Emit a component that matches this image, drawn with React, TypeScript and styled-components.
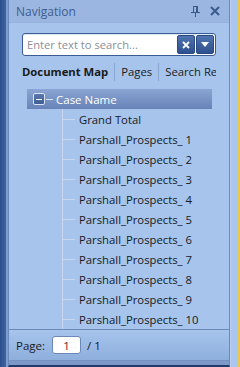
import React from "react";
import styled, { createGlobalStyle } from "styled-components";

const Global = createGlobalStyle`
  html, body { margin: 0; padding: 0; width: 240px; height: 367px; overflow: hidden; }
  body { font-family: "Open Sans", "Noto Sans", sans-serif; background: #a6c4ec; }
`;

const Frame = styled.div`
  display: flex;
  width: 240px;
  height: 367px;
  background: #3d5f98;
`;

const LeftEdge = styled.div`
  width: 6px;
  background: linear-gradient(to right, #2c4f8c, #3f64a2);
  border-right: 2px solid #7e9dcc;
`;

const Panel = styled.div`
  flex: 1;
  display: flex;
  flex-direction: column;
  min-width: 0;
  border-left: 1px solid #6a88bb;
  border-right: 1px solid #6c88b8;
  border-bottom: 2px solid #1f3a6b;
  background: #a6c4ec;
`;

const RightStrip = styled.div`
  width: 7px;
  background: #aac6ee;
  border-right: 2px solid #e8c850;
  border-left: 1px solid #b9d0ef;
`;

const TitleBar = styled.div`
  height: 22px;
  display: flex;
  align-items: center;
  padding: 0 6px 0 7px;
  background: #9ab6e1;
  border-bottom: 1px solid #95b1dc;
`;

const Title = styled.span`
  flex: 1;
  font-size: 12px;
  color: #3e5d8e;
`;

const TitleButton = styled.span`
  width: 16px;
  height: 16px;
  display: flex;
  align-items: center;
  justify-content: center;
  margin-left: 4px;
`;

const Body = styled.div`
  flex: 1;
  display: flex;
  flex-direction: column;
  padding: 10px 0 0 0;
  min-height: 0;
`;

const SearchBox = styled.div`
  margin: 0 13px 0 13px;
  height: 21px;
  display: flex;
  align-items: center;
  background: #ffffff;
  border: 1px solid #3b5c92;
  border-radius: 3px;
  box-shadow: inset 0 1px 0 #dbe6f5;
  padding: 0 1px 0 4px;
`;

const SearchText = styled.span`
  flex: 1;
  font-size: 11.2px;
  color: #8a8f98;
  white-space: nowrap;
`;

const SearchButton = styled.span`
  width: 16px;
  height: 17px;
  display: flex;
  align-items: center;
  justify-content: center;
  background: linear-gradient(#4f74ae, #2f5090);
  border: 1px solid #2a4a84;
  border-radius: 2px;
  margin-left: 1px;
`;

const Tabs = styled.div`
  display: flex;
  align-items: center;
  height: 20px;
  margin: 6px 13px 0 13px;
  white-space: nowrap;
  overflow: hidden;
`;

const Tab = styled.span<{ $active?: boolean }>`
  font-size: 11.3px;
  color: #1b1b1b;
  font-weight: ${p => (p.$active ? 700 : 400)};
  padding: 0 6px;
  border-left: ${p => (p.$active ? "none" : "1px solid #8aa5d0")};
  line-height: 18px;
  &:first-child { padding-left: 0; }
`;

const TreeBox = styled.div`
  flex: 1;
  margin-top: 5px;
  border-bottom: 1px solid #6c88b8;
  padding: 2px 0 0 18px;
  display: flex;
  flex-direction: column;
`;

const RootRow = styled.div`
  height: 20px;
  width: 185px;
  display: flex;
  align-items: center;
  padding-left: 6px;
  box-sizing: border-box;
  background: linear-gradient(#8aa5d2, #6783b8);
`;

const ExpandBox = styled.span`
  width: 10px;
  height: 10px;
  border: 1px solid #d9e4f5;
  border-radius: 2px;
  background: linear-gradient(#5a78ad, #3f5e96);
  display: flex;
  align-items: center;
  justify-content: center;
  &::after {
    content: "";
    width: 6px;
    height: 1px;
    background: #ffffff;
  }
`;

const RootLine = styled.span`
  width: 7px;
  height: 1px;
  background: #d6e2f4;
  margin: 0 3px 0 1px;
`;

const RootLabel = styled.span`
  font-size: 11.5px;
  color: #ffffff;
`;

const Children = styled.div`
  margin-left: 35px;
  border-left: 1px solid #c9d8ef;
  height: 220px;
  display: flex;
  flex-direction: column;
`;

const ItemRow = styled.div`
  height: 20px;
  display: flex;
  align-items: center;
  flex-shrink: 0;
  &::before {
    content: "";
    width: 12px;
    height: 1px;
    background: #c9d8ef;
    margin-right: 4px;
  }
`;

const ItemLabel = styled.span`
  font-size: 11.3px;
  color: #161a24;
  white-space: nowrap;
`;

const Footer = styled.div`
  height: 30px;
  display: flex;
  align-items: center;
  padding-left: 7px;
  background: linear-gradient(#a6c4ec, #8fafdc);
  border-bottom: 1px solid #7491c0;
  font-size: 11.5px;
  color: #1b1b1b;
`;

const FooterBand = styled.div`
  height: 4px;
  background: #7c99c9;
`;

const PageInput = styled.span`
  width: 27px;
  height: 16px;
  margin: 0 6px 0 7px;
  background: #ffffff;
  border: 1px solid #6c88b8;
  border-radius: 3px;
  display: flex;
  align-items: center;
  justify-content: center;
  color: #6b1a1a;
  font-size: 11.5px;
`;

const items = [
  "Grand Total",
  ...Array.from({ length: 10 }, (_, i) => `Parshall_Prospects_ ${i + 1}`),
];

export default function App() {
  return (
    <>
      <Global />
      <Frame>
        <LeftEdge />
        <Panel>
          <TitleBar>
            <Title>Navigation</Title>
            <TitleButton>
              <svg width="9" height="11" viewBox="0 0 9 11">
                <rect x="2" y="0" width="5" height="1" fill="#3b5a8c" />
                <rect x="2" y="1" width="1" height="5" fill="#3b5a8c" />
                <rect x="5" y="1" width="2" height="5" fill="#3b5a8c" />
                <rect x="0" y="6" width="9" height="1" fill="#3b5a8c" />
                <rect x="4" y="7" width="1" height="4" fill="#3b5a8c" />
              </svg>
            </TitleButton>
            <TitleButton>
              <svg width="10" height="10" viewBox="0 0 10 10">
                <path d="M1 1 L9 9 M9 1 L1 9" stroke="#3b5a8c" strokeWidth="2" />
              </svg>
            </TitleButton>
          </TitleBar>
          <Body>
            <SearchBox>
              <SearchText>Enter text to search...</SearchText>
              <SearchButton>
                <svg width="8" height="8" viewBox="0 0 8 8">
                  <path d="M1 1 L7 7 M7 1 L1 7" stroke="#ffffff" strokeWidth="1.8" />
                </svg>
              </SearchButton>
              <SearchButton>
                <svg width="8" height="5" viewBox="0 0 8 5">
                  <path d="M0 0 H8 L4 5 Z" fill="#ffffff" />
                </svg>
              </SearchButton>
            </SearchBox>
            <Tabs>
              <Tab $active>Document Map</Tab>
              <Tab>Pages</Tab>
              <Tab>Search Results</Tab>
            </Tabs>
            <TreeBox>
              <RootRow>
                <ExpandBox />
                <RootLine />
                <RootLabel>Case Name</RootLabel>
              </RootRow>
              <Children>
                {items.map(t => (
                  <ItemRow key={t}>
                    <ItemLabel>{t}</ItemLabel>
                  </ItemRow>
                ))}
              </Children>
            </TreeBox>
            <Footer>
              Page:
              <PageInput>1</PageInput>/ 1
            </Footer>
            <FooterBand />
          </Body>
        </Panel>
        <RightStrip />
      </Frame>
    </>
  );
}
